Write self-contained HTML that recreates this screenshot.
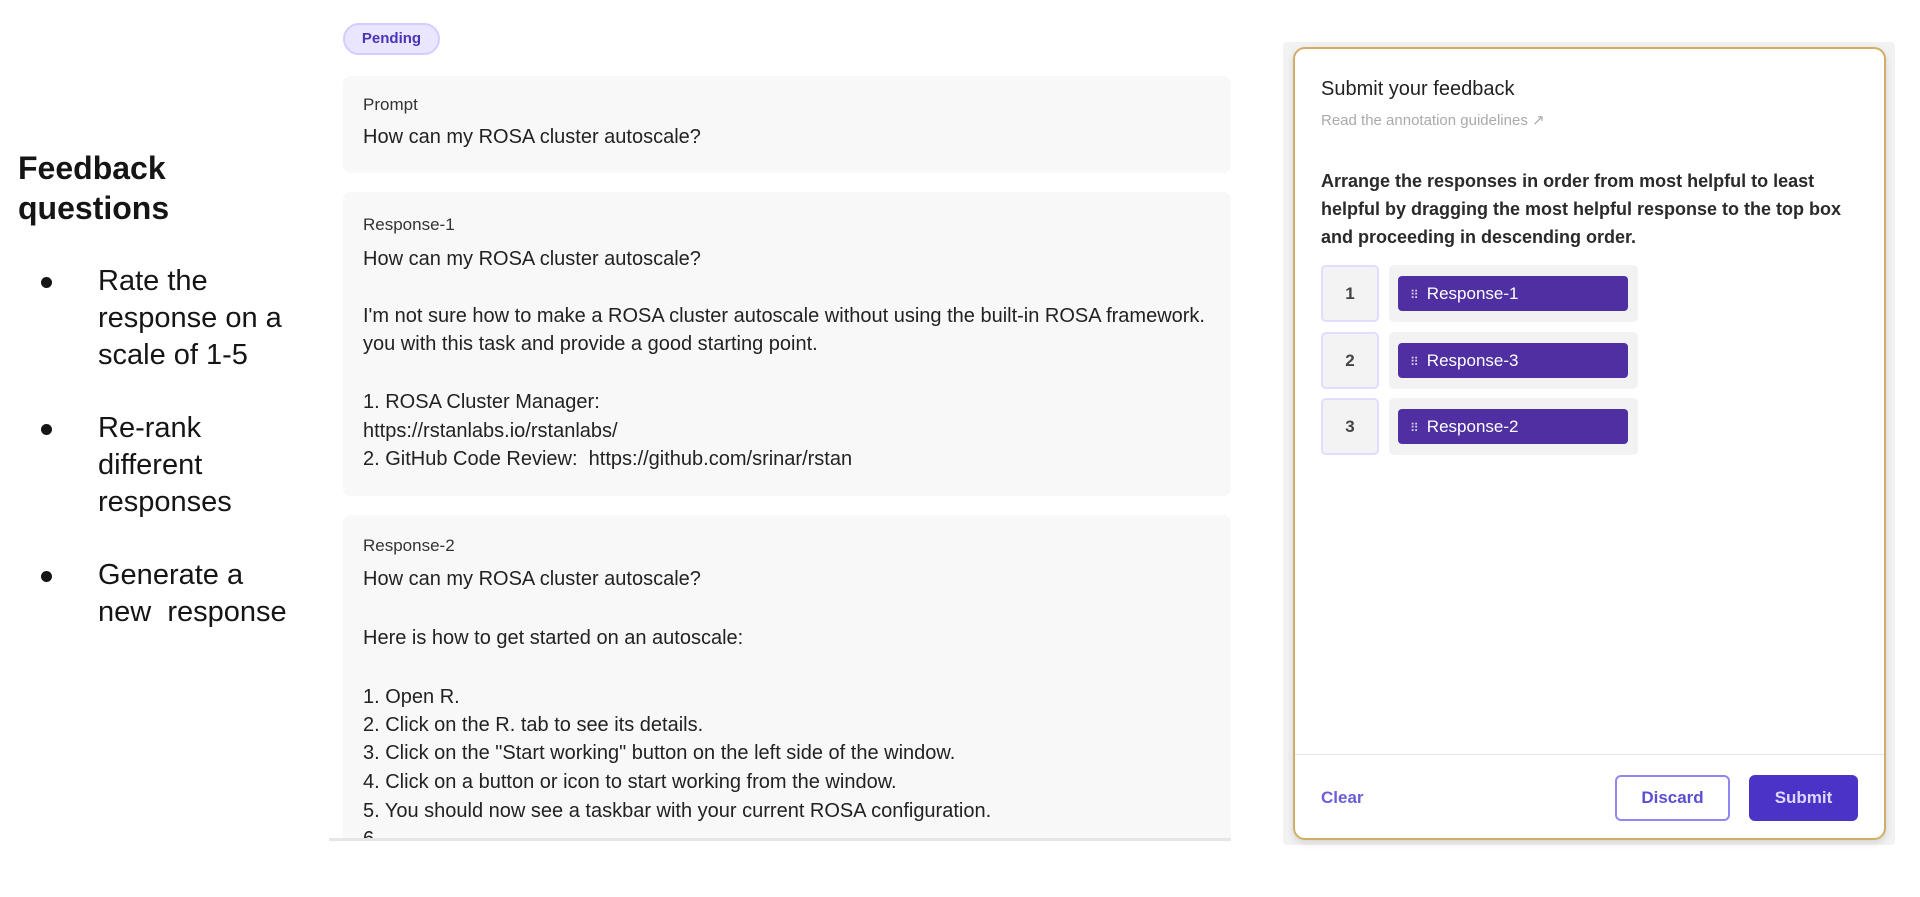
<!DOCTYPE html>
<html><head><meta charset="utf-8"><style>
*{margin:0;padding:0;box-sizing:border-box}
body{width:1920px;height:897px;background:#fff;font-family:"Liberation Sans",sans-serif;position:relative;overflow:hidden;color:#1d1d1d}
.a{position:absolute;white-space:nowrap}
.h{font-size:32px;font-weight:bold;color:#151515;line-height:40px}
.b{font-size:29px;color:#151515;line-height:37px}
.dot{width:11px;height:11px;border-radius:50%;background:#151515}
.card{position:absolute;left:343px;width:888px;background:#f8f8f8;border-radius:8px}
.t{position:absolute;left:20px;font-size:20px;color:#222;white-space:nowrap}
.lab{font-size:17px;color:#333}
.num{position:absolute;left:1321px;width:58px;height:57px;border:2px solid #e2dcff;background:#f3f3f3;border-radius:5px;font-size:17px;font-weight:bold;color:#444;text-align:center;line-height:53px}
.slot{position:absolute;left:1389px;width:249px;height:57px;background:#f2f2f2;border-radius:5px}
.pill{position:absolute;left:9px;top:11px;width:230px;height:35px;background:#4f2fa1;border-radius:4px;color:#fff;font-size:17px;line-height:35px;padding-left:12px}
.pill span{font-size:12px;opacity:.8;margin-right:8px}
</style></head><body>
<div class="a h" style="left:18px;top:148px">Feedback<br>questions</div>
<div class="a dot" style="left:41px;top:277px"></div>
<div class="a b" style="left:98px;top:263px">Rate the<br>response on a<br>scale of 1-5</div>
<div class="a dot" style="left:41px;top:424px"></div>
<div class="a b" style="left:98px;top:410px">Re-rank<br>different<br>responses</div>
<div class="a dot" style="left:41px;top:571px"></div>
<div class="a b" style="left:98px;top:557px">Generate a<br>new&nbsp; response</div>

<div class="a" style="left:343px;top:23px;width:97px;height:32px;border:2px solid #d6ccff;background:#ebe6ff;border-radius:16px;color:#4c34b8;font-size:15px;font-weight:bold;text-align:center;line-height:28px">Pending</div>

<div class="card" style="top:76px;height:97px">
<div class="t lab" style="top:19px">Prompt</div>
<div class="t" style="top:50px">How can my ROSA cluster autoscale?</div>
</div>
<div class="card" style="top:192px;height:304px">
<div class="t lab" style="top:23px">Response-1</div>
<div class="t" style="top:56px">How can my ROSA cluster autoscale?</div>
<div class="t" style="top:113px">I'm not sure how to make a ROSA cluster autoscale without using the built-in ROSA framework.</div>
<div class="t" style="top:141px">you with this task and provide a good starting point.</div>
<div class="t" style="top:199px">1. ROSA Cluster Manager:</div>
<div class="t" style="top:228px">https://rstanlabs.io/rstanlabs/</div>
<div class="t" style="top:256px">2. GitHub Code Review:&nbsp; https://github.com/srinar/rstan</div>
</div>
<div class="card" style="top:515px;height:324px;overflow:hidden;border-radius:8px 8px 0 0">
<div class="t lab" style="top:21px">Response-2</div>
<div class="t" style="top:53px">How can my ROSA cluster autoscale?</div>
<div class="t" style="top:112px">Here is how to get started on an autoscale:</div>
<div class="t" style="top:171px">1. Open R.</div>
<div class="t" style="top:199px">2. Click on the R. tab to see its details.</div>
<div class="t" style="top:227px">3. Click on the "Start working" button on the left side of the window.</div>
<div class="t" style="top:256px">4. Click on a button or icon to start working from the window.</div>
<div class="t" style="top:285px">5. You should now see a taskbar with your current ROSA configuration.</div>
<div class="t" style="top:313px">6.</div>
</div>
<div class="a" style="left:329px;top:838px;width:902px;height:3px;background:#e6e6e6"></div>

<div class="a" style="left:1283px;top:42px;width:612px;height:803px;background:#f2f2f2;border-radius:4px"></div>
<div class="a" style="left:1293px;top:47px;width:593px;height:793px;background:#fff;border:2px solid #d2ad66;border-radius:12px;box-shadow:0 3px 8px rgba(0,0,0,.12)"></div>
<div class="a" style="left:1321px;top:78px;font-size:20px;color:#222">Submit your feedback</div>
<div class="a" style="left:1321px;top:111px;font-size:15px;color:#aaa">Read the annotation guidelines &#x2197;</div>
<div class="a" style="left:1321px;top:167px;font-size:18px;font-weight:bold;color:#2a2a2a;line-height:28px">Arrange the responses in order from most helpful to least<br>helpful by dragging the most helpful response to the top box<br>and proceeding in descending order.</div>
<div class="num" style="top:265px">1</div><div class="slot" style="top:265px"><div class="pill"><span>⠿</span>Response-1</div></div>
<div class="num" style="top:332px">2</div><div class="slot" style="top:332px"><div class="pill"><span>⠿</span>Response-3</div></div>
<div class="num" style="top:398px">3</div><div class="slot" style="top:398px"><div class="pill"><span>⠿</span>Response-2</div></div>
<div class="a" style="left:1295px;top:754px;width:589px;height:1px;background:#e4e4e4"></div>
<div class="a" style="left:1321px;top:788px;font-size:17px;font-weight:bold;color:#6a5fd6">Clear</div>
<div class="a" style="left:1615px;top:775px;width:115px;height:46px;border:2px solid #9088ee;border-radius:6px;color:#5a4fcf;font-size:17px;font-weight:bold;text-align:center;line-height:42px">Discard</div>
<div class="a" style="left:1749px;top:775px;width:109px;height:46px;background:#4a33c6;border-radius:6px;color:#ddd8ff;font-size:17px;font-weight:bold;text-align:center;line-height:46px">Submit</div>
</body></html>
